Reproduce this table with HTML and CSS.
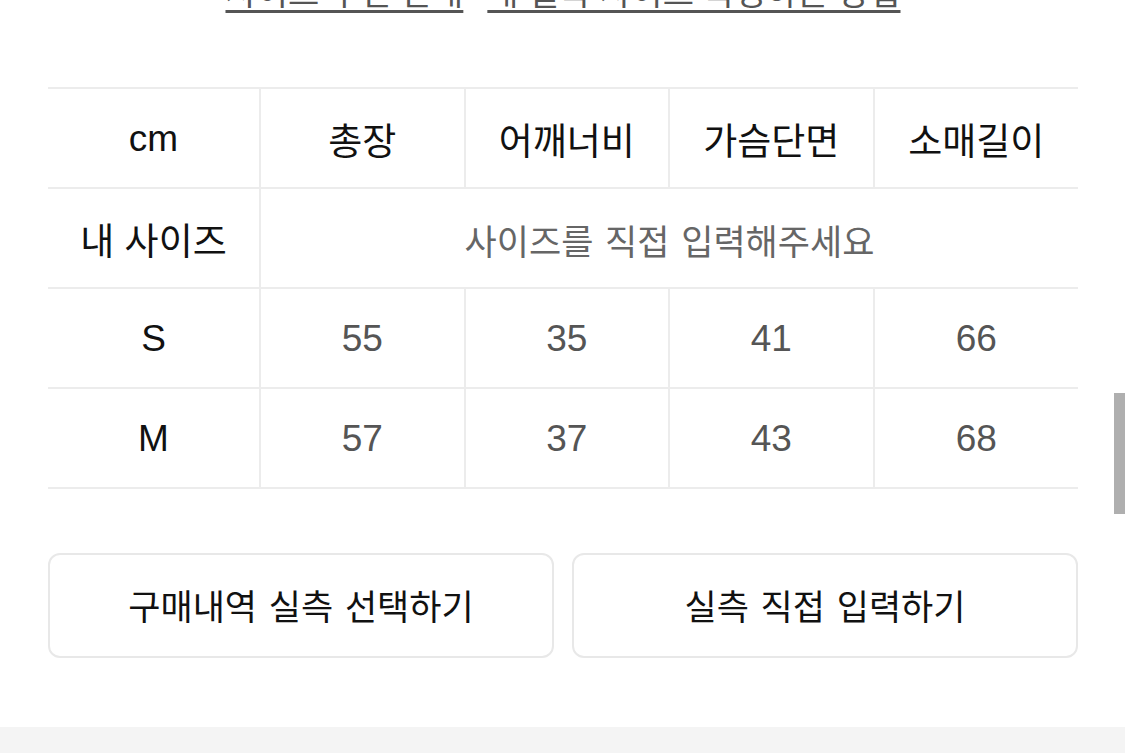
FILE: index.html
```html
<!DOCTYPE html>
<html lang="ko">
<head>
<meta charset="utf-8">
<title>사이즈 표</title>
<link rel="stylesheet" href="styles.css">
</head>
<body>
<div class="page">
  <div class="links">
    <a class="link" href="#">사이즈 추천 안내</a>
    <a class="link" href="#">내 실측 사이즈 측정하는 방법</a>
  </div>

  <table class="size-table">
    <tr class="head">
      <th class="first">cm</th>
      <th>총장</th>
      <th>어깨너비</th>
      <th>가슴단면</th>
      <th>소매길이</th>
    </tr>
    <tr>
      <td class="first">내 사이즈</td>
      <td colspan="4" class="hint">사이즈를 직접 입력해주세요</td>
    </tr>
    <tr>
      <td class="first">S</td>
      <td>55</td><td>35</td><td>41</td><td>66</td>
    </tr>
    <tr>
      <td class="first">M</td>
      <td>57</td><td>37</td><td>43</td><td>68</td>
    </tr>
  </table>

  <div class="actions">
    <button class="btn" type="button">구매내역 실측 선택하기</button>
    <button class="btn" type="button">실측 직접 입력하기</button>
  </div>
</div>
<div class="footer-band"></div>
<div class="scroll-thumb"></div>
</body>
</html>
```

FILE: styles.css
```css
* { box-sizing: border-box; }
html, body { margin: 0; padding: 0; background: #fff; }
body {
  font-family: "Liberation Sans", "Noto Sans CJK KR", sans-serif;
  color: #111;
  overflow: hidden;
  height: 753px;
  position: relative;
}
.page {
  padding: 0 47px 0 48px;
}
.links {
  display: flex;
  justify-content: center;
  gap: 24px;
  margin-top: -24px;
  height: 40px;
}
.link {
  font-size: 34px;
  color: #555;
  text-decoration: underline;
  text-decoration-thickness: 3px;
  text-underline-offset: 5px;
  line-height: 34px;
}
.size-table {
  width: 100%;
  border-collapse: collapse;
  margin-top: 71px;
  table-layout: fixed;
}
.size-table td, .size-table th {
  height: 100px;
  border: 2px solid #ececec;
  text-align: center;
  font-size: 37px;
  font-weight: normal;
  padding: 2px 0 0;
  color: #555;
}
.size-table th { color: #111; }
.size-table td.first, .size-table th.first {
  width: 212px;
  color: #111;
  border-left: none;
}
.size-table td:last-child, .size-table th:last-child { border-right: none; }
.size-table td.hint { color: #666; font-size: 35px; word-spacing: 2px; }

.actions {
  display: flex;
  gap: 18px;
  margin-top: 64px;
}
.btn {
  flex: 1;
  height: 105px;
  background: #fff;
  border: 2px solid #e8e8e8;
  border-radius: 12px;
  font-family: "Liberation Sans", "Noto Sans CJK KR", sans-serif;
  font-size: 35px;
  word-spacing: 2px;
  color: #111;
  padding: 0 0 2px;
}
.footer-band {
  position: absolute;
  left: 0;
  right: 0;
  top: 727px;
  height: 26px;
  background: #f4f4f4;
}
.scroll-thumb {
  position: absolute;
  left: 1114px;
  top: 393px;
  width: 11px;
  height: 121px;
  background: #afafaf;
}
```
